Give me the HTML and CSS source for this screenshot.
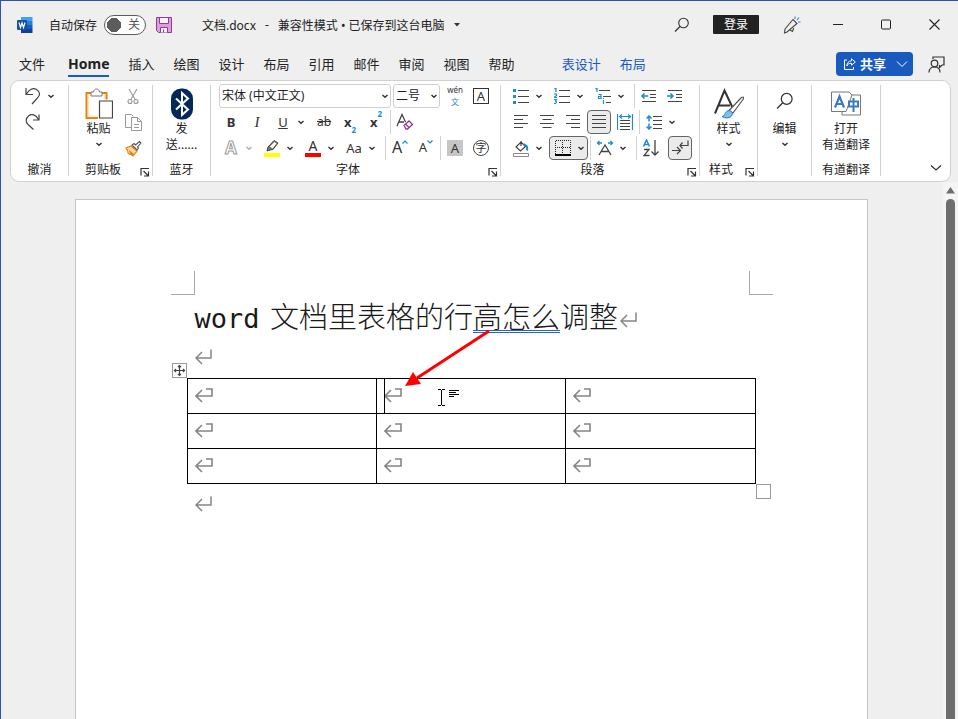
FILE: index.html
```html
<!DOCTYPE html>
<html lang="zh-CN">
<head>
    <meta charset="UTF-8">
    <meta name="viewport" content="width=device-width, initial-scale=1.0">
    <title>文档.docx</title>
    <link rel="stylesheet" href="styles.css">
</head>
<body>

    <!-- shared symbols -->
    <svg class="symbols" width="0" height="0" aria-hidden="true">
        <symbol id="chev" viewBox="0 0 8 8"><path d="M1.5 3l2.5 2.3L6.500 3" fill="none" stroke="#333" stroke-width="1.4"/></symbol>
        <symbol id="launch" viewBox="0 0 10 10"><path d="M1 8.500V1.500h8M3.500 4L8 8.500M8.500 4.500v4.500H4" fill="none" stroke="#333" stroke-width="1.200"/></symbol>
        <symbol id="para" viewBox="0 0 18 16"><path d="M16 0.500v8.500H1M7 3L1 9l6 6" fill="none" stroke="#858585" stroke-width="1.500"/></symbol>
        <symbol id="cell" viewBox="0 0 18 16"><path d="M11 1h6v7H1M7 2L1 8l6 6" fill="none" stroke="#858585" stroke-width="1.600"/></symbol>
        <symbol id="search" viewBox="0 0 16 16"><circle cx="9.500" cy="6" r="4.800" fill="none" stroke="#333" stroke-width="1.100"/><path d="M6 9.500L1 14.500" stroke="#333" stroke-width="1.200"/></symbol>
    </svg>

    <header class="titlebar">
        <svg class="word-logo" width="16" height="16" viewBox="0 0 16 16">
            <path d="M4 0h11.500v4H4z" fill="#41a5ee"/><path d="M4 4h11.500v4H4z" fill="#2b7cd3"/><path d="M4 8h11.500v4H4z" fill="#185abd"/><path d="M4 12h11.500v4H4z" fill="#103f91"/>
            <rect y="3" width="10" height="10" rx="1" fill="#174ea6"/>
            <path d="M2 5.500l1.500 5L5 6l1.500 4.500 1.500-5" fill="none" stroke="#fff" stroke-width="1.200"/>
        </svg>
        <label class="autosave" for="autosave">自动保存</label>
        <span class="toggle"><input type="checkbox" id="autosave"><span class="toggle-text">关</span></span>
        <button class="save" aria-label="保存">
            <svg width="16" height="16" viewBox="0 0 16 16"><path d="M.5.500h15v15H2.500l-2-2z" fill="#d9a0da" stroke="#93389b"/><path d="M3.500.500h9v6h-9zM4.500 15.500v-5h7v5M7.500 12.500v3" fill="#f6f2f6" stroke="#93389b"/></svg>
        </button>
        <div class="doc-name">
            <span>文档.docx</span><span>-</span><span>兼容性模式 • 已保存到这台电脑</span>
            <svg width="6" height="4" viewBox="0 0 6 4"><path d="M0 0h6L3 3.500z" fill="#333"/></svg>
        </div>
        <div class="title-right">
            <button class="title-btn" aria-label="搜索"><svg width="16" height="16"><use href="#search"/></svg></button>
            <button class="login">登录</button>
            <button class="title-btn" aria-label="即将推出">
                <svg width="18" height="18" viewBox="0 0 18 18" fill="none" stroke="#444" stroke-width="1.100"><path d="M2 13L10 3.500l4 4L4 16l-2.500 1zM7 14l2.500 1.500 1.200-3.500"/><path d="M12 3V0.500M14 4l2-2.500M15 6h2.500" stroke="#1e8bcd"/></svg>
            </button>
            <div class="window-btns">
                <button aria-label="最小化"><svg width="11" height="11" viewBox="0 0 11 11"><path d="M0 5.500h10" stroke="#222"/></svg></button>
                <button aria-label="最大化"><svg width="11" height="11" viewBox="0 0 11 11"><rect x=".5" y="1" width="9" height="9" rx="1" fill="none" stroke="#222"/></svg></button>
                <button aria-label="关闭"><svg width="11" height="11" viewBox="0 0 11 11"><path d="M.5.500l10 10M10.500.500l-10 10" stroke="#222" stroke-width="1.100"/></svg></button>
            </div>
        </div>
    </header>

    <nav class="tabs">
        <a href="#" class="file">文件</a>
        <a href="#" class="active">Home</a>
        <a href="#">插入</a>
        <a href="#">绘图</a>
        <a href="#">设计</a>
        <a href="#">布局</a>
        <a href="#">引用</a>
        <a href="#">邮件</a>
        <a href="#">审阅</a>
        <a href="#">视图</a>
        <a href="#">帮助</a>
        <a href="#" class="context first">表设计</a>
        <a href="#" class="context">布局</a>
        <button class="share">
            <svg width="12" height="12" viewBox="0 0 12 12" fill="none" stroke="#fff"><path d="M3 2H.500v9.500h9V9M7.500.800L11.300 4 7.500 7.200V5.300C5 5.300 3.800 6 2.800 8 3 5 4.500 3 7.500 2.800z"/></svg>
            <span>共享</span>
            <svg class="share-chev" width="12" height="8" viewBox="0 0 12 8"><path d="M1 1.500l5 5 5-5" fill="none" stroke="#fff"/></svg>
        </button>
        <button class="comments" aria-label="批注">
            <svg width="17" height="17" viewBox="0 0 17 17" fill="none" stroke="#333" stroke-width="1.200"><circle cx="6.500" cy="7.500" r="3.300"/><path d="M1 16.500c0-7.500 11-7.500 11 0M5 3V1h11v8h-2l-2.500 2.500V9"/></svg>
        </button>
    </nav>

    <section class="ribbon">
        <div class="group undo">
            <div class="group-body rows">
                <div class="row">
                    <button class="tool" aria-label="撤消"><svg width="16" height="18" viewBox="0 0 16 18" fill="none" stroke="#444" stroke-width="1.200"><path d="M1 1v6.500h7M1.500 7C4 2.500 8 .500 11.500 2.500c4 2.500 4 6 .5 9L7 17"/></svg></button>
                    <button class="chev" aria-label="更多"><svg width="8" height="8"><use href="#chev"/></svg></button>
                </div>
                <div class="row">
                    <button class="tool" aria-label="恢复"><svg width="16" height="18" viewBox="0 0 16 18" fill="none" stroke="#444" stroke-width="1.200"><path d="M14 1.500V7H8M13.500 6.500C11 1.500 6.500.500 3.500 3 .5 5.500.500 9 3 11.500l5.500 5"/></svg></button>
                </div>
            </div>
            <div class="group-foot"><span>撤消</span></div>
        </div>
        <span class="divider"></span>

        <div class="group clipboard">
            <div class="group-body">
                <button class="big">
                    <svg width="28" height="32" viewBox="0 0 28 32" fill="none"><path d="M6 4.500H1.500v25H13M17 4.500h4.500V11" stroke="#e8820c" stroke-width="2"/><path d="M3.500 6v21.500H13M19.500 6v5" stroke="#fbe3c4"/><path d="M6 7.500v-4h2.500c.5-4 5.500-4 6 0H17v4z" fill="#fff" stroke="#777"/><path d="M14.500 12.500h13v17h-13z" fill="#fff" stroke="#444" stroke-width="1.200"/></svg>
                    <span>粘贴</span>
                    <svg class="big-chev" width="8" height="8"><use href="#chev"/></svg>
                </button>
                <div class="rows">
                    <div class="row"><button class="tool" aria-label="剪切"><svg width="12" height="17" viewBox="0 0 12 17" fill="none" stroke="#999" stroke-width="1.100"><path d="M2 1l6.500 11M10 1L3.500 12"/><circle cx="3" cy="13.500" r="2"/><circle cx="9" cy="13.500" r="2"/></svg></button></div>
                    <div class="row"><button class="tool" aria-label="复制"><svg width="17" height="17" viewBox="0 0 17 17" fill="none" stroke="#999"><path d="M6 13.500H.500V.500h6l2 2"/><path d="M6.500 3.500h6l4 4v9h-10zM12.500 3.500v4h4M9 10.500h5M9 13.500h5" fill="#fff"/></svg></button></div>
                    <div class="row"><button class="tool" aria-label="格式刷"><svg width="17" height="17" viewBox="0 0 17 17"><path d="M1 8l5-2 6 5-4 5c-1-2-4-1-5-3 0-2-1-4-2-5z" fill="#fbd9a8" stroke="#e8820c" stroke-width="1.200"/><path d="M4 10l5 4-1 2-3-2z" fill="#e8820c"/><path d="M7 5l5 5 1.500-2-1-1L16 3l-1.500-1.500L10.500 5 9 3.500z" fill="#fff" stroke="#555" stroke-width="1.100"/></svg></button></div>
                </div>
            </div>
            <div class="group-foot"><span>剪贴板</span><button class="launcher" aria-label="剪贴板选项"><svg width="10" height="10"><use href="#launch"/></svg></button></div>
        </div>
        <span class="divider"></span>

        <div class="group bluetooth">
            <div class="group-body">
                <button class="big">
                    <svg width="22" height="32" viewBox="0 0 22 32"><rect width="22" height="31" rx="10" fill="#05285a"/><path d="M5 10l12 11-6 5.500V4.500l6 5.500L5 21" fill="none" stroke="#fff" stroke-width="2"/></svg>
                    <span>发<br>送......</span>
                </button>
            </div>
            <div class="group-foot"><span>蓝牙</span></div>
        </div>
        <span class="divider"></span>

        <div class="group font">
            <div class="group-body rows">
                <div class="row">
                    <span class="combo font-name"><select aria-label="字体"><option>宋体 (中文正文)</option></select><svg width="8" height="8"><use href="#chev"/></svg></span>
                    <span class="combo font-size"><select aria-label="字号"><option>二号</option></select><svg width="8" height="8"><use href="#chev"/></svg></span>
                    <button class="tool pinyin"><span>wén</span><span class="blue">文</span></button>
                    <button class="tool"><span class="boxed">A</span></button>
                </div>
                <div class="row">
                    <button class="tool"><b>B</b></button>
                    <button class="tool italic">I</button>
                    <span class="split"><button class="tool"><u>U</u></button><button class="chev" aria-label="下划线样式"><svg width="8" height="8"><use href="#chev"/></svg></button></span>
                    <button class="tool strike">ab</button>
                    <button class="tool script"><b>x</b><sub>2</sub></button>
                    <button class="tool script"><b>x</b><sup>2</sup></button>
                    <span class="line"></span>
                    <button class="tool" aria-label="清除格式"><svg width="18" height="18" viewBox="0 0 18 18" fill="none"><path d="M1 13L6 1.500 9.500 9M2.500 9H8" stroke="#444" stroke-width="1.300"/><path d="M8 12.500l5-4.500 3.500 3.500-5 4.500H10z" fill="#fff" stroke="#93389b" stroke-width="1.300"/><path d="M9.500 11l3.500 3.500" stroke="#93389b" stroke-width="1.300"/></svg></button>
                </div>
                <div class="row">
                    <span class="split"><button class="tool outline">A</button><button class="chev faded" aria-label="文本效果"><svg width="8" height="8"><use href="#chev"/></svg></button></span>
                    <span class="split"><button class="tool" aria-label="突出显示"><svg width="16" height="17" viewBox="0 0 16 17"><path d="M3 11l1-4 6-6.500 4 2.500L9 9.500l-3 .5z" fill="#777" stroke="#444"/><path d="M6 6.500l2.500 2L12.500 3.500 10.500 2z" fill="#fff"/><path d="M0 13h16v4H0z" fill="#ff0"/></svg></button><button class="chev" aria-label="突出显示颜色"><svg width="8" height="8"><use href="#chev"/></svg></button></span>
                    <span class="split"><button class="tool"><span class="font-color">A</span></button><button class="chev" aria-label="字体颜色"><svg width="8" height="8"><use href="#chev"/></svg></button></span>
                    <span class="split"><button class="tool aa">Aa</button><button class="chev" aria-label="更改大小写"><svg width="8" height="8"><use href="#chev"/></svg></button></span>
                    <span class="line wide"></span>
                    <button class="tool grow" aria-label="增大字号">A<svg width="6" height="4" viewBox="0 0 6 4"><path d="M.5 3.500L3 1l2.500 2.500" fill="none" stroke="#1e8bcd" stroke-width="1.200"/></svg></button>
                    <button class="tool shrink" aria-label="减小字号">A<svg width="6" height="4" viewBox="0 0 6 4"><path d="M.5.500L3 3 5.500.500" fill="none" stroke="#1e8bcd" stroke-width="1.200"/></svg></button>
                    <span class="line"></span>
                    <button class="tool"><span class="shade">A</span></button>
                    <button class="tool"><span class="circled">字</span></button>
                </div>
            </div>
            <div class="group-foot"><span>字体</span><button class="launcher" aria-label="字体选项"><svg width="10" height="10"><use href="#launch"/></svg></button></div>
        </div>
        <span class="divider"></span>

        <div class="group paragraph">
            <div class="group-body rows">
                <div class="row">
                    <span class="split"><button class="tool" aria-label="项目符号"><svg width="16" height="16" viewBox="0 0 16 16"><path d="M0 1h3v3H0zM0 7h3v3H0zM0 13h3v3H0z" fill="#1e8bcd"/><path d="M5 2.500h11M5 8.500h11M5 14.500h11" stroke="#444" stroke-width="1.200"/></svg></button><button class="chev" aria-label="项目符号库"><svg width="8" height="8"><use href="#chev"/></svg></button></span>
                    <span class="split"><button class="tool" aria-label="编号"><svg width="16" height="16" viewBox="0 0 16 16" fill="none"><path d="M5 2.500h11M5 8.500h11M5 14.500h11" stroke="#444" stroke-width="1.200"/><path d="M.5 1L2 0v4M0 6h2.500v1.500L0 9.500h3M0 11.500h2.500L1.500 13l1 1-1 1.500H0" stroke="#1e8bcd" stroke-width="1.200"/></svg></button><button class="chev" aria-label="编号库"><svg width="8" height="8"><use href="#chev"/></svg></button></span>
                    <span class="split"><button class="tool" aria-label="多级列表"><svg width="16" height="16" viewBox="0 0 16 16" fill="none"><path d="M4 2.500h11M8 8.500h8M11 14.500h5" stroke="#444" stroke-width="1.200"/><path d="M.5 1L2 0v4M3.500 6.500H6v4H3.500v-2H6M8.500 12v4M8.500 10v1" stroke="#1e8bcd" stroke-width="1.200"/></svg></button><button class="chev" aria-label="多级列表库"><svg width="8" height="8"><use href="#chev"/></svg></button></span>
                    <span class="line wide"></span>
                    <button class="tool" aria-label="减少缩进"><svg width="16" height="14" viewBox="0 0 16 14" fill="none"><path d="M1 1.500h14M9 5.500h6M9 8.500h6M1 12.500h14" stroke="#444" stroke-width="1.200"/><path d="M7 7H1M3.500 4.500L1 7l2.500 2.500" stroke="#1e8bcd" stroke-width="1.500"/></svg></button>
                    <button class="tool" aria-label="增加缩进"><svg width="16" height="14" viewBox="0 0 16 14" fill="none"><path d="M1 1.500h14M9 5.500h6M9 8.500h6M1 12.500h14" stroke="#444" stroke-width="1.200"/><path d="M0 7h6M3.500 4.500L6 7 3.500 9.500" stroke="#1e8bcd" stroke-width="1.500"/></svg></button>
                </div>
                <div class="row">
                    <button class="tool" aria-label="左对齐"><svg width="16" height="14" viewBox="0 0 16 14"><path d="M1 .500h14M1 4.500h9M1 8.500h14M1 12.500h9" stroke="#444" stroke-width="1.200"/></svg></button>
                    <button class="tool" aria-label="居中"><svg width="16" height="14" viewBox="0 0 16 14"><path d="M1 .500h14M3.500 4.500h9M1 8.500h14M3.500 12.500h9" stroke="#444" stroke-width="1.200"/></svg></button>
                    <button class="tool" aria-label="右对齐"><svg width="16" height="14" viewBox="0 0 16 14"><path d="M1 .500h14M6 4.500h9M1 8.500h14M6 12.500h9" stroke="#444" stroke-width="1.200"/></svg></button>
                    <button class="tool on" aria-label="两端对齐"><svg width="16" height="14" viewBox="0 0 16 14"><path d="M1 .500h14M1 4.500h14M1 8.500h14M1 12.500h14" stroke="#444" stroke-width="1.200"/></svg></button>
                    <button class="tool" aria-label="分散对齐"><svg width="16" height="16" viewBox="0 0 16 16" fill="none"><path d="M3 6.500h10M3 9.500h10M3 12.500h10M3 15.500h10" stroke="#444"/><path d="M.500 0v16M15.500 0v16M2.500 2.500h11M5 .500L2.500 2.500 5 4.500M11 .500l2.500 2L11 4.500" stroke="#1e8bcd" stroke-width="1.200"/></svg></button>
                    <span class="line"></span>
                    <span class="split"><button class="tool" aria-label="行距"><svg width="16" height="15" viewBox="0 0 16 15" fill="none"><path d="M7 1.500h9M7 5.500h9M7 9.500h9M7 13.500h9" stroke="#444" stroke-width="1.200"/><path d="M3 1v5.500M3 8.500V14M.5 3.500L3 1l2.500 2.500M.5 11.500L3 14l2.500-2.500" stroke="#1e8bcd" stroke-width="1.500"/></svg></button><button class="chev" aria-label="行距选项"><svg width="8" height="8"><use href="#chev"/></svg></button></span>
                </div>
                <div class="row">
                    <span class="split"><button class="tool" aria-label="底纹"><svg width="17" height="17" viewBox="0 0 17 17" fill="none"><path d="M.500 13.500h15v3H.500z" stroke="#888"/><path d="M3 7l5-5 4.500 4.500-5 4.500zM8 6V1" stroke="#444" stroke-width="1.200"/><path d="M10.500 4l2.500 1.500c1.500 1 1.500 2.500 1 5" stroke="#1e8bcd" stroke-width="2"/></svg></button><button class="chev" aria-label="底纹颜色"><svg width="8" height="8"><use href="#chev"/></svg></button></span>
                    <span class="split on"><button class="tool" aria-label="边框"><svg width="16" height="16" viewBox="0 0 16 16" fill="none" stroke="#222"><path d="M.5 14V.500h15V14M7.500 0v14M0 7.500h16" stroke-dasharray="1 1"/><path d="M0 15h16" stroke="#000" stroke-width="2"/></svg></button><button class="chev" aria-label="边框选项"><svg width="8" height="8"><use href="#chev"/></svg></button></span>
                    <span class="line"></span>
                    <span class="split"><button class="tool" aria-label="中文版式"><svg width="18" height="16" viewBox="0 0 18 16" fill="none"><path d="M3 15L9 5l6 10M5.500 11.500h7" stroke="#444" stroke-width="1.300"/><path d="M6 3H1.500M3.500 1l-2 2 2 2M12 3h4.500M14.500 1l2 2-2 2" stroke="#1e8bcd" stroke-width="1.300"/></svg></button><button class="chev" aria-label="中文版式选项"><svg width="8" height="8"><use href="#chev"/></svg></button></span>
                    <span class="line wide"></span>
                    <button class="tool" aria-label="排序"><svg width="18" height="18" viewBox="0 0 18 18" fill="none"><path d="M1.500 7.500L4.500 1l3 6.500M2.500 5.500h4" stroke="#1e8bcd" stroke-width="1.500"/><path d="M2 10.500h5L2 16.500h5.500M13 1v15M9.500 12.500L13 16l3.500-3.500" stroke="#444" stroke-width="1.300"/></svg></button>
                    <button class="tool on marks" aria-label="显示编辑标记"><svg width="18" height="16" viewBox="0 0 18 16" fill="none" stroke="#444" stroke-width="1.200"><path d="M17 .500V5.500H9M11.500 2.500L9 5.500l2.500 3M1 10.500h8M6 7l3.500 3.500L6 14"/></svg></button>
                </div>
            </div>
            <div class="group-foot"><span>段落</span><button class="launcher" aria-label="段落选项"><svg width="10" height="10"><use href="#launch"/></svg></button></div>
        </div>
        <span class="divider"></span>

        <div class="group styles">
            <div class="group-body">
                <button class="big">
                    <svg width="30" height="32" viewBox="0 0 30 32" fill="none"><path d="M1 25L10.500 2 19 20M4 17h12" stroke="#333" stroke-width="2"/><path d="M15 22L27 9.500c2-2 3.500-.5 2 1.500L19 24.500z" fill="#fff" stroke="#555" stroke-width="1.200"/><path d="M8 28c3 0 3-6 7-6 4 1 4 4 2 6-2 2-6 2-9 0z" fill="#83beec" stroke="#1e7fc9"/></svg>
                    <span>样式</span>
                    <svg class="big-chev" width="8" height="8"><use href="#chev"/></svg>
                </button>
            </div>
            <div class="group-foot"><span>样式</span><button class="launcher" aria-label="样式选项"><svg width="10" height="10"><use href="#launch"/></svg></button></div>
        </div>
        <span class="divider"></span>

        <div class="group editing">
            <div class="group-body">
                <button class="big">
                    <svg width="18" height="30" viewBox="0 -3 16 28"><use href="#search" width="16" height="16"/></svg>
                    <span>编辑</span>
                    <svg class="big-chev" width="8" height="8"><use href="#chev"/></svg>
                </button>
            </div>
            <div class="group-foot"></div>
        </div>
        <span class="divider"></span>

        <div class="group translate">
            <div class="group-body">
                <button class="big">
                    <svg width="30" height="32" viewBox="0 0 30 32" fill="none"><path d="M19 6.500h10.500v20H11V22" stroke="#777"/><path d="M.500 3.500H18l3 3-6 16.500H.500z" fill="#fff" stroke="#777"/><path d="M4 19L8.500 8 13 19M5.500 15.500h6" stroke="#3b7cbd" stroke-width="2.200"/><path d="M18 13h9v5h-9zM22.500 9.500v14" stroke="#3b7cbd" stroke-width="2"/></svg>
                    <span>打开<br>有道翻译</span>
                </button>
            </div>
            <div class="group-foot"><span>有道翻译</span></div>
        </div>
        <span class="divider"></span>

        <button class="collapse" aria-label="折叠功能区"><svg width="12" height="8" viewBox="0 0 12 8"><path d="M1 1.500l5 4.500 5-4.500" fill="none" stroke="#333" stroke-width="1.300"/></svg></button>
    </section>

    <div class="workspace">
        <main class="canvas">
            <article class="page">
                <div class="margins"><span class="corner left"></span><span class="corner right"></span></div>
                <h1><span class="latin">word</span> 文档里表格的行<span class="grammar">高怎么</span>调整<svg width="18" height="16"><use href="#para"/></svg></h1>
                <p class="empty"><svg width="18" height="16"><use href="#para"/></svg></p>
                <div class="table-wrap">
                    <svg class="handle move" viewBox="0 0 15 15"><rect x=".5" y=".5" width="14" height="14" fill="#fff" stroke="#999"/><path d="M7.500 2.500v10M2.500 7.500h10M6 4l1.500-1.500L9 4M6 11l1.500 1.500L9 11M4 6L2.500 7.500 4 9M11 6l1.500 1.500L11 9" fill="none" stroke="#444" stroke-width="1.200"/></svg>
                    <table>
                        <tr>
                            <td><svg width="18" height="16"><use href="#cell"/></svg></td>
                            <td class="current"><svg width="18" height="16"><use href="#cell"/></svg></td>
                            <td><svg width="18" height="16"><use href="#cell"/></svg></td>
                        </tr>
                        <tr>
                            <td><svg width="18" height="16"><use href="#cell"/></svg></td>
                            <td><svg width="18" height="16"><use href="#cell"/></svg></td>
                            <td><svg width="18" height="16"><use href="#cell"/></svg></td>
                        </tr>
                        <tr>
                            <td><svg width="18" height="16"><use href="#cell"/></svg></td>
                            <td><svg width="18" height="16"><use href="#cell"/></svg></td>
                            <td><svg width="18" height="16"><use href="#cell"/></svg></td>
                        </tr>
                    </table>
                    <span class="handle resize"></span>
                    <svg class="arrow" width="88" height="58" viewBox="0 0 88 58"><path d="M85 1L13 48" stroke="#f00" stroke-width="3"/><path d="M1 56L9 42l8 12z" fill="#f00"/></svg>
                    <svg class="cursor" width="22" height="17" viewBox="0 0 22 17"><path d="M0 .500h3M4 .500h3M3.500 1v15M0 16.500h3M4 16.500h3M11 1.500h10M11 3.500h7M11 5.500h10M11 7.500h5" stroke="#000" fill="none"/></svg>
                </div>
                <p class="empty after"><svg width="18" height="16"><use href="#para"/></svg></p>
            </article>
        </main>
        <div class="scrollbar">
            <svg width="9" height="7" viewBox="0 0 9 7"><path d="M4.500 0L9 6.500H0z" fill="#6e6e6e"/></svg>
            <span class="thumb"></span>
        </div>
    </div>

</body>
</html>
```
FILE: styles.css
```css
* {
    box-sizing: border-box;
}
body {
    margin: 0;
    height: 100vh;
    overflow: hidden;
    display: flex;
    flex-direction: column;
    font-family: "Noto Sans", "Noto Sans CJK SC", sans-serif;
    font-size: 12px;
    color: #222;
    background: #efefef;
    border-top: 1px solid #2b57a0;
    border-left: 1px solid #2b57a0;
}
button {
    font: inherit;
    color: inherit;
    background: none;
    border: none;
    padding: 0;
    cursor: pointer;
}
svg {
    display: block;
    flex: none;
}
.symbols {
    position: absolute;
}

/* title bar */
.titlebar {
    display: flex;
    align-items: center;
    height: 47px;
    padding-left: 16px;
    flex: none;
    white-space: nowrap;
}
.autosave {
    margin-left: 16px;
}
.toggle {
    position: relative;
    margin-left: 7px;
    height: 20px;
}
.toggle input {
    appearance: none;
    display: block;
    width: 42px;
    height: 20px;
    margin: 0;
    border: 1px solid #5c5c5c;
    border-radius: 10px;
    background: radial-gradient(circle at 9px 9px, #5c5c5c 7px, #fff 7px);
}
.toggle-text {
    position: absolute;
    top: 0;
    right: 6px;
    line-height: 20px;
    color: #555;
    pointer-events: none;
}
.save {
    margin-left: 10px;
}
.doc-name {
    display: flex;
    align-items: center;
    gap: 9px;
    margin-left: 30px;
}
.title-right {
    display: flex;
    align-items: center;
    margin-left: auto;
}
.title-btn {
    display: flex;
    align-items: center;
    justify-content: center;
    width: 32px;
    height: 32px;
}
.login {
    width: 46px;
    height: 19px;
    margin: 0 17px 0 15px;
    line-height: 18px;
    color: #fff;
    background: #222;
    border-radius: 1px;
}
.window-btns {
    display: flex;
    margin-left: 6px;
}
.window-btns button {
    display: flex;
    align-items: center;
    justify-content: center;
    width: 48px;
    height: 32px;
}

/* tabs */
.tabs {
    display: flex;
    align-items: center;
    gap: 19px;
    height: 32px;
    padding: 0 13px 0 18px;
    flex: none;
    font-size: 13px;
    white-space: nowrap;
}
.tabs a {
    color: #222;
    text-decoration: none;
    line-height: 22px;
    border-top: 2px solid transparent;
    border-bottom: 2px solid transparent;
}
.tabs .file {
    margin-right: 4px;
}
.tabs .active {
    font-size: 14px;
    font-weight: bold;
    border-bottom-color: #185abd;
}
.tabs .context {
    color: #185abd;
}
.tabs .first {
    margin-left: 28px;
}
.share {
    display: flex;
    align-items: center;
    width: 77px;
    height: 24px;
    margin-left: auto;
    padding: 0 5px 0 8px;
    gap: 4px;
    color: #fff;
    font-weight: bold;
    line-height: 20px;
    background: #185abd;
    border-radius: 4px;
}
.share-chev {
    margin-left: auto;
}
.comments {
    margin-left: -4px;
}

/* ribbon */
.ribbon {
    display: flex;
    margin: 0 7px 0 9px;
    padding: 2px 0;
    flex: none;
    background: #fff;
    border: 1px solid #d0d0d0;
    border-radius: 9px;
    white-space: nowrap;
}
.divider {
    flex: none;
    width: 1px;
    margin: 2px 0 3px;
    background: #d2d2d2;
}
.group {
    display: flex;
    flex-direction: column;
    flex: none;
}
.undo {
    width: 57px;
}
.undo .row {
    padding-left: 9px;
}
.clipboard {
    width: 83px;
}
.clipboard .group-body {
    padding-left: 8px;
}
.clipboard .big {
    width: 43px;
}
.bluetooth {
    width: 57px;
}
.font {
    width: 289px;
}
.paragraph {
    width: 198px;
}
.font .group-body,
.paragraph .group-body {
    padding-left: 7px;
}
.styles {
    width: 57px;
}
.editing {
    width: 53px;
}
.translate {
    width: 68px;
}
.group-body {
    display: flex;
    height: 78px;
}
.rows {
    display: flex;
    flex-direction: column;
}
.row {
    display: flex;
    align-items: center;
    height: 26px;
}
.group-foot {
    display: flex;
    height: 18px;
    line-height: 18px;
}
.group-foot span {
    flex: 1;
    text-align: center;
}
.launcher {
    width: 15px;
    padding-top: 4px;
}
.launcher svg {
    margin: 0 3px;
}
.big {
    display: flex;
    flex-direction: column;
    align-items: center;
    width: 100%;
    padding-top: 5px;
    line-height: 16px;
}
.big > svg:first-child {
    height: 33px;
}
.big-chev {
    margin-top: 3px;
}
.tool {
    display: flex;
    align-items: center;
    justify-content: center;
    width: 26px;
    height: 24px;
    font-size: 13px;
    color: #333;
    line-height: 16px;
}
.chev {
    display: flex;
    align-items: center;
    justify-content: center;
    width: 10px;
    height: 24px;
}
.faded {
    opacity: 0.4;
}
.split {
    display: flex;
    margin-right: 5px;
}
.line {
    width: 1px;
    height: 24px;
    margin: 0 1px;
    background: #d2d2d2;
}
.line.wide {
    margin-left: 3px;
}
.on {
    background: #ebebeb;
    border: 1px solid #666;
    border-radius: 4px;
}
.tool.on {
    width: 24px;
    margin: 0 1px;
}
.split.on {
    width: 39px;
    height: 24px;
    margin-right: 1px;
    align-items: center;
}
.tool.marks {
    margin-left: 4px;
}
.combo {
    position: relative;
    margin-right: 2px;
}
.combo select {
    appearance: none;
    width: 100%;
    height: 24px;
    padding: 0 0 2px 2px;
    font: inherit;
    color: #222;
    background: #fff;
    border: 1px solid #d0d0d0;
    border-radius: 3px;
}
.combo svg {
    position: absolute;
    right: 2px;
    top: 8px;
    pointer-events: none;
}
.font-name {
    width: 172px;
    margin-left: 1px;
}
.font-size {
    width: 47px;
}
.pinyin {
    flex-direction: column;
    font-size: 8px;
    line-height: 12px;
}
.blue,
.script sub,
.script sup {
    color: #1e8bcd;
}
.boxed {
    width: 16px;
    height: 16px;
    line-height: 14px;
    border: 1px solid #333;
}
.italic {
    font-family: "Liberation Serif", serif;
    font-style: italic;
    font-size: 15px;
}
.strike {
    text-decoration: line-through;
    font-size: 12px;
}
.script sub,
.script sup {
    font-size: 8px;
    font-weight: bold;
    line-height: 8px;
}
.script sub {
    align-self: flex-end;
}
.script sup {
    align-self: flex-start;
}
.outline {
    color: #fff;
    font-size: 17px;
    font-weight: bold;
    -webkit-text-stroke: 1px #999;
}
.font-color {
    width: 16px;
    height: 17px;
    line-height: 12px;
    font-size: 14px;
    border-bottom: 4px solid #f00;
}
.aa {
    font-size: 13px;
}
.grow,
.shrink {
    align-items: flex-start;
    font-size: 16px;
    line-height: 22px;
}
.grow svg,
.shrink svg {
    margin-top: 4px;
}
.shrink {
    font-size: 13px;
}
.shade {
    width: 16px;
    height: 16px;
    background: #c6c6c6;
}
.circled {
    width: 16px;
    height: 16px;
    font-size: 11px;
    line-height: 14px;
    border: 1px solid #444;
    border-radius: 50%;
}
.collapse {
    align-self: flex-end;
    margin: 0 8px 7px auto;
}

/* document */
.workspace {
    display: flex;
    flex: 1;
    min-height: 0;
}
.canvas {
    flex: 1;
    padding-top: 17px;
    overflow: hidden;
}
.page {
    max-width: 793px;
    min-height: 1122px;
    margin: 0 auto;
    padding: 71px 118px 0 119px;
    background: #fff;
    border: 1px solid #c6c6c6;
}
.margins {
    display: flex;
    justify-content: space-between;
    margin: 0 -24px;
}
.corner {
    width: 24px;
    height: 24px;
    border-bottom: 1px solid #aaa;
}
.corner.left {
    border-right: 1px solid #aaa;
}
.corner.right {
    border-left: 1px solid #aaa;
}
h1 {
    display: flex;
    align-items: baseline;
    height: 46px;
    margin: 0;
    font-family: "Noto Sans CJK SC", sans-serif;
    font-size: 29px;
    font-weight: 300;
    line-height: 40px;
    white-space: pre;
    color: #1a1a1a;
}
h1 svg {
    margin-left: 2px;
}
.latin {
    margin-right: 4px;
    font-family: "DejaVu Sans Mono", monospace;
    font-size: 27px;
}
.grammar {
    text-decoration: underline double #2a62d0 1px;
    text-underline-offset: 2px;
}
.empty {
    display: flex;
    align-items: center;
    height: 32px;
    margin: 0 0 5px;
}
.empty.after {
    height: 40px;
}
.table-wrap {
    position: relative;
    margin: 0 -7px 0 -8px;
}
table {
    width: 100%;
    table-layout: fixed;
    border-collapse: collapse;
}
td {
    position: relative;
    height: 35px;
    padding: 0 7px;
    border: 1px solid #000;
}
.current::before {
    content: "";
    position: absolute;
    top: 0;
    bottom: 0;
    left: 7px;
    border-left: 1px solid #000;
}
.handle {
    position: absolute;
    width: 15px;
    height: 15px;
}
.move {
    left: -15px;
    top: -15px;
}
.resize {
    right: -15px;
    bottom: -15px;
    border: 1px solid #999;
}
.arrow {
    position: absolute;
    left: 217px;
    top: -48px;
}
.cursor {
    position: absolute;
    left: 251px;
    top: 11px;
}
.scrollbar {
    display: flex;
    flex-direction: column;
    align-items: center;
    width: 15px;
    margin-left: 2px;
    padding-top: 5px;
    background: #f4f4f4;
}
.thumb {
    flex: 1;
    width: 9px;
    margin-top: 5px;
    background: #6e6e6e;
    border-radius: 5px 5px 0 0;
}
```
